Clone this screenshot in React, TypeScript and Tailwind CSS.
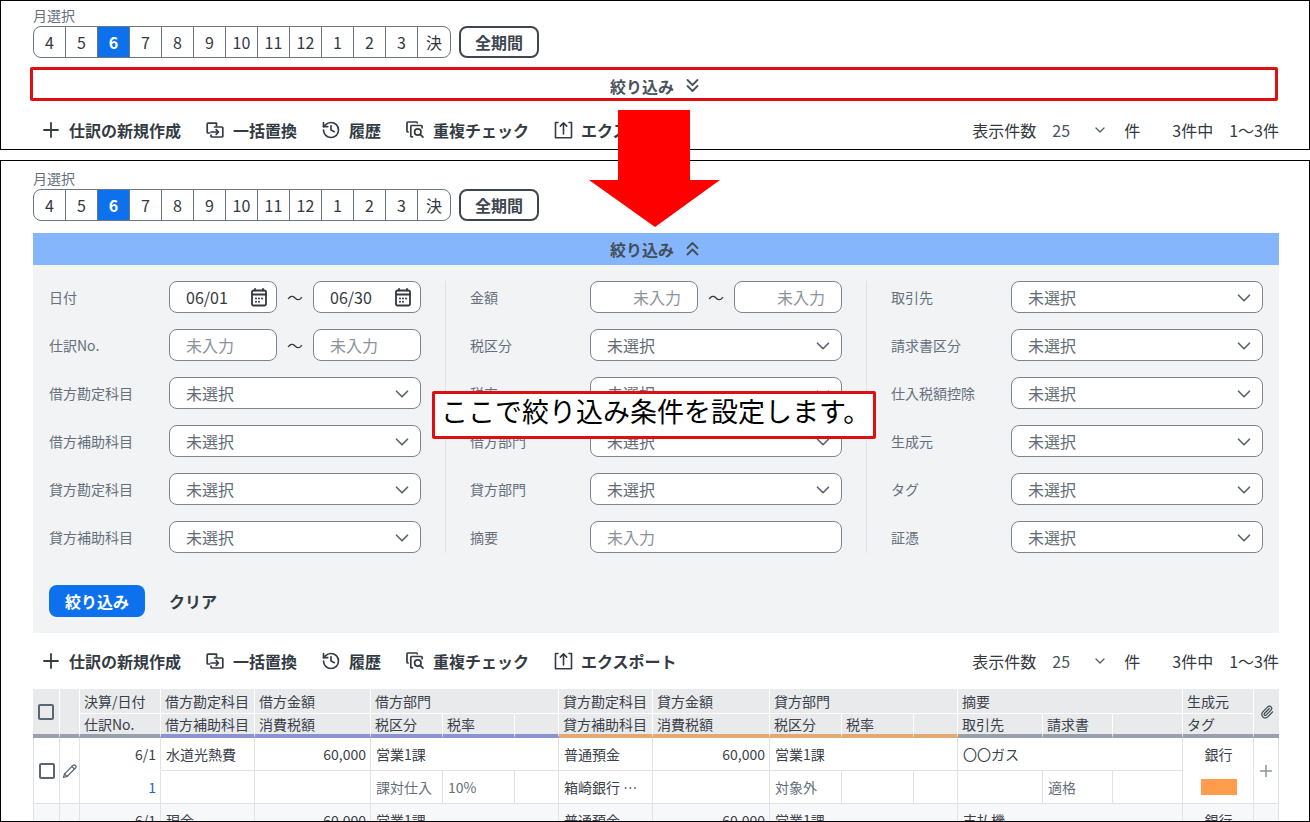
import type { ReactNode } from "react";
import { ChevronDown, History, Paperclip } from "lucide-react";

const MONTHS = ["4", "5", "6", "7", "8", "9", "10", "11", "12", "1", "2", "3", "決"];

const LINE = {
  fill: "none",
  stroke: "currentColor",
  strokeLinecap: "round" as const,
  strokeLinejoin: "round" as const,
};

function PlusIcon() {
  return (
    <svg viewBox="0 0 20 20" className="size-5" strokeWidth={1.8} {...LINE}>
      <path d="M10 3v14M3 10h14" />
    </svg>
  );
}

function ReplaceIcon() {
  return (
    <svg viewBox="0 0 20 20" className="size-5" strokeWidth={1.7} {...LINE}>
      <path d="M4.500 13H3a.8.8 0 0 1-.8-.8V4a.8.8 0 0 1 .8-.8h8.500v2.600" />
      <path d="M9.500 7h7.500a.8.8 0 0 1 .8.8v8.400a.8.8 0 0 1-.8.8H6.800a.8.8 0 0 1-.8-.8V15" />
      <path d="M6 12h7.300M11.200 9.700l2.300 2.300-2.300 2.300" />
    </svg>
  );
}

function DuplicateIcon() {
  return (
    <svg viewBox="0 0 20 20" className="size-5" strokeWidth={1.7} {...LINE}>
      <path d="M3.200 12h-.4a.8.8 0 0 1-.8-.8V2.800a.8.8 0 0 1 .8-.8h8.700a.8.8 0 0 1 .8.8" />
      <path d="M7.500 16.800H6.600a.8.8 0 0 1-.8-.8V6.300a.8.8 0 0 1 .8-.8h9.700a.8.8 0 0 1 .8.8v1.500" />
      <circle cx="12.800" cy="12" r="3.200" />
      <path d="M15.200 14.400l2.800 2.800" />
    </svg>
  );
}

function ExportIcon() {
  return (
    <svg viewBox="0 0 20 20" className="size-5" strokeWidth={1.6} {...LINE}>
      <path d="M5 2.500H2.500v15.200h16V2.500H16" />
      <path d="M10.500 14v-11M7.300 6.100l3.200-3.200 3.200 3.200" />
    </svg>
  );
}

function CalendarIcon() {
  return (
    <svg viewBox="0 0 20 20" className="size-5" strokeWidth={1.8} {...LINE}>
      <rect x="3" y="3.500" width="14" height="15" rx="1.500" />
      <path d="M3 7.500h14M6 1.800v1.700M14 1.800v1.700" />
      <path d="M7 11.500h.01M10 11.500h.01M13 11.500h.01M7 14.700h.01M10 14.700h.01" strokeWidth={2} />
    </svg>
  );
}

function PencilIcon() {
  return (
    <svg viewBox="0 0 16 16" className="size-4" strokeWidth={1.200} {...LINE}>
      <path d="M1.500 14.500l1-3.500L11.200 2.200a1.300 1.300 0 0 1 1.800 0l.8.8a1.300 1.300 0 0 1 0 1.800L5 13.500z" />
      <path d="M9.900 3.500l2.600 2.600M2.500 11l2.500 2.500" />
    </svg>
  );
}

function DoubleChevron({ up = false }: { up?: boolean }) {
  return (
    <svg viewBox="0 0 20 20" className="size-5" strokeWidth={1.800} {...LINE}>
      <path d={up ? "M5.500 9l5-5 5 5M5.500 15.500l5-5 5 5" : "M5.500 4l5 5 5-5M5.500 10l5 5 5-5"} />
    </svg>
  );
}

function MonthPicker() {
  return (
    <div>
      <div className="pb-0.5 text-sm leading-[18px] text-[#66707c]">月選択</div>
      <div className="flex gap-2">
        <div className="flex overflow-hidden rounded-lg border border-[#6b7684]">
          {MONTHS.map((m, i) => (
            <button
              key={m}
              type="button"
              className={
                "h-[30px] w-8 " +
                (i < MONTHS.length - 1 ? "border-r border-[#6b7684] " : "") +
                (m === "6" ? "bg-[#0d71ee] font-bold text-white" : "text-[#33393f]")
              }
            >
              {m}
            </button>
          ))}
        </div>
        <button type="button" className="h-8 w-20 rounded-lg border-2 border-[#3f4650] font-bold text-[#3f4650]">
          全期間
        </button>
      </div>
    </div>
  );
}

function Tool({ icon, children }: { icon: ReactNode; children: ReactNode }) {
  return (
    <button type="button" className="flex items-center gap-2 font-bold whitespace-nowrap text-[#343b43]">
      {icon}
      {children}
    </button>
  );
}

function Toolbar({ id }: { id: string }) {
  return (
    <div className="mt-3 flex h-8 items-center justify-between text-[#33393f]">
      <div className="flex gap-6 pl-2">
        <Tool icon={<PlusIcon />}>仕訳の新規作成</Tool>
        <Tool icon={<ReplaceIcon />}>一括置換</Tool>
        <Tool icon={<History className="size-5" strokeWidth={2} />}>履歴</Tool>
        <Tool icon={<DuplicateIcon />}>重複チェック</Tool>
        <Tool icon={<ExportIcon />}>エクスポート</Tool>
      </div>
      <div className="flex items-center gap-8 whitespace-nowrap">
        <div className="flex items-center gap-2">
          <label htmlFor={id}>表示件数</label>
          <div className="relative">
            <select id={id} className="h-8 w-[72px] appearance-none bg-transparent pl-2 text-[#4b535d]">
              <option>25</option>
            </select>
            <ChevronDown className="pointer-events-none absolute top-2 right-2 size-4 text-[#55606b]" strokeWidth={2} />
          </div>
          <span>件</span>
        </div>
        <div className="flex gap-4">
          <span>3件中</span>
          <span>1〜3件</span>
        </div>
      </div>
    </div>
  );
}

const BOX = "h-8 w-full min-w-0 rounded-lg border border-[#7b858f] bg-white placeholder:text-[#8b939c] placeholder:opacity-100 ";

function SelectRow({ label, id }: { label: string; id: string }) {
  return (
    <div className="flex h-8 items-center">
      <label htmlFor={id} className="w-30 shrink-0 text-sm text-[#66707c]">
        {label}
      </label>
      <div className="relative flex-1">
        <select id={id} className={BOX + "appearance-none px-4 text-[#626c77]"}>
          <option>未選択</option>
        </select>
        <ChevronDown className="pointer-events-none absolute top-1.5 right-2 size-[22px] text-[#5b6672]" strokeWidth={1.900} />
      </div>
    </div>
  );
}

function RangeRow({ label, id, kind }: { label: string; id: string; kind: "date" | "number" | "amount" }) {
  const dates = ["06/01", "06/30"];
  const field = (n: number) => (
    <div className="relative flex-1">
      <input
        id={n === 0 ? id : id + "-to"}
        aria-label={n === 0 ? undefined : label}
        type="text"
        placeholder="未入力"
        defaultValue={kind === "date" ? dates[n] : undefined}
        className={BOX + "px-4 text-[#33393f] " + (kind === "amount" ? "text-right" : "")}
      />
      {kind === "date" && (
        <span className="pointer-events-none absolute top-1.5 right-2 text-[#33393f]">
          <CalendarIcon />
        </span>
      )}
    </div>
  );
  return (
    <div className="flex h-8 items-center">
      <label htmlFor={id} className="w-30 shrink-0 text-sm text-[#66707c]">
        {label}
      </label>
      <div className="flex flex-1 items-center">
        {field(0)}
        <span className="w-9 text-center text-[#33393f]">〜</span>
        {field(1)}
      </div>
    </div>
  );
}

function Filters() {
  return (
    <form className="bg-[#f1f3f5] p-4" onSubmit={(e) => e.preventDefault()}>
      <div className="grid grid-cols-[1fr_1px_1fr_1px_1fr] gap-x-6">
        <div className="flex flex-col gap-4">
          <RangeRow label="日付" id="date" kind="date" />
          <RangeRow label="仕訳No." id="number" kind="number" />
          <SelectRow label="借方勘定科目" id="debit-account" />
          <SelectRow label="借方補助科目" id="debit-sub" />
          <SelectRow label="貸方勘定科目" id="credit-account" />
          <SelectRow label="貸方補助科目" id="credit-sub" />
        </div>
        <div className="bg-[#dfe3e6]" />
        <div className="flex flex-col gap-4">
          <RangeRow label="金額" id="amount" kind="amount" />
          <SelectRow label="税区分" id="tax-class" />
          <SelectRow label="税率" id="tax-rate" />
          <SelectRow label="借方部門" id="debit-dept" />
          <SelectRow label="貸方部門" id="credit-dept" />
          <div className="flex h-8 items-center">
            <label htmlFor="note" className="w-30 shrink-0 text-sm text-[#66707c]">
              摘要
            </label>
            <input id="note" type="text" placeholder="未入力" className={BOX + "px-4"} />
          </div>
        </div>
        <div className="bg-[#dfe3e6]" />
        <div className="flex flex-col gap-4">
          <SelectRow label="取引先" id="partner" />
          <SelectRow label="請求書区分" id="invoice" />
          <SelectRow label="仕入税額控除" id="deduction" />
          <SelectRow label="生成元" id="source" />
          <SelectRow label="タグ" id="tag" />
          <SelectRow label="証憑" id="evidence" />
        </div>
      </div>
      <div className="mt-8 flex items-center gap-6">
        <button type="submit" className="h-8 w-24 rounded-lg bg-[#0d71ee] font-bold text-white">
          絞り込み
        </button>
        <button type="button" className="font-bold text-[#343b43]">
          クリア
        </button>
      </div>
    </form>
  );
}

const COLS = [27, 20, 81, 94, 116, 72, 72, 44, 94, 117, 72, 72, 44, 85, 70, 70, 71, 25];

const GRAY = "border-b-[#98a1ab]";
const DEBIT = "border-b-[#8b93d2]";
const CREDIT = "border-b-[#e3a972]";

function Top({ children, span = 1 }: { children?: ReactNode; span?: number }) {
  return (
    <th colSpan={span} className="h-[25px] border-r border-b border-white px-1 text-left font-normal">
      {children}
    </th>
  );
}

function Bottom({ children, tone }: { children?: ReactNode; tone: string }) {
  return (
    <th className={"h-6 border-r border-b-4 border-r-white px-1 text-left font-normal " + tone}>
      {children}
    </th>
  );
}

function Cell({
  children,
  span = 1,
  open = false,
  align = "",
}: {
  children?: ReactNode;
  span?: number;
  open?: boolean;
  align?: string;
}) {
  return (
    <td
      colSpan={span}
      className={
        "h-[33px] border-r border-b border-r-[#dfe3e8] pr-1 pl-[5px] " +
        (open ? "border-b-transparent " : "border-b-[#dfe3e8] ") +
        align
      }
    >
      {children}
    </td>
  );
}

const TALL = "border-r border-b border-[#dfe3e8] align-middle ";
const CHECK = "block size-4 appearance-none rounded-xs border-2 border-[#5b6672] mx-auto ";

function JournalTable() {
  return (
    <table className="mt-3 w-full table-fixed border-separate border-spacing-0 text-sm leading-5 whitespace-nowrap text-[#3a4149]">
      <colgroup>
        {COLS.map((w, i) => (
          <col key={i} style={{ width: w }} />
        ))}
      </colgroup>
      <thead className="bg-[#e8eaec]">
        <tr>
          <th rowSpan={2} className={"border-r border-b-4 border-r-white " + GRAY}>
            <input type="checkbox" aria-label="すべて選択" className={CHECK + "bg-transparent"} />
          </th>
          <th rowSpan={2} className={"border-r border-b-4 border-r-white " + GRAY} />
          <Top>決算/日付</Top>
          <Top>借方勘定科目</Top>
          <Top>借方金額</Top>
          <Top span={3}>借方部門</Top>
          <Top>貸方勘定科目</Top>
          <Top>貸方金額</Top>
          <Top span={3}>貸方部門</Top>
          <Top span={3}>摘要</Top>
          <Top>生成元</Top>
          <th rowSpan={2} className={"border-b-4 " + GRAY}>
            <Paperclip className="mx-auto size-3.5" strokeWidth={2} />
          </th>
        </tr>
        <tr>
          <Bottom tone={GRAY}>仕訳No.</Bottom>
          <Bottom tone={DEBIT}>借方補助科目</Bottom>
          <Bottom tone={DEBIT}>消費税額</Bottom>
          <Bottom tone={DEBIT}>税区分</Bottom>
          <Bottom tone={DEBIT}>税率</Bottom>
          <Bottom tone={DEBIT} />
          <Bottom tone={CREDIT}>貸方補助科目</Bottom>
          <Bottom tone={CREDIT}>消費税額</Bottom>
          <Bottom tone={CREDIT}>税区分</Bottom>
          <Bottom tone={CREDIT}>税率</Bottom>
          <Bottom tone={CREDIT} />
          <Bottom tone={GRAY}>取引先</Bottom>
          <Bottom tone={GRAY}>請求書</Bottom>
          <Bottom tone={GRAY} />
          <Bottom tone={GRAY}>タグ</Bottom>
        </tr>
      </thead>
      <tbody>
        <tr>
          <td rowSpan={2} className={TALL + "border-l"}>
            <input type="checkbox" aria-label="仕訳 1 を選択" className={CHECK + "bg-white"} />
          </td>
          <td rowSpan={2} className={TALL}>
            <button type="button" aria-label="編集" className="mx-auto block text-[#5b6672]">
              <PencilIcon />
            </button>
          </td>
          <Cell open align="text-right">6/1</Cell>
          <Cell>水道光熱費</Cell>
          <Cell align="text-right">60,000</Cell>
          <Cell span={3}>営業1課</Cell>
          <Cell>普通預金</Cell>
          <Cell align="text-right">60,000</Cell>
          <Cell span={3}>営業1課</Cell>
          <Cell span={3}>〇〇ガス</Cell>
          <Cell open align="text-center">銀行</Cell>
          <td rowSpan={2} className={TALL}>
            <button type="button" aria-label="証憑を追加" className="mx-auto block text-[#8b939c]">
              <svg viewBox="0 0 16 16" className="size-4" strokeWidth={1.500} {...LINE}>
                <path d="M8 2.500v11M2.500 8h11" />
              </svg>
            </button>
          </td>
        </tr>
        <tr className="text-[#66707c]">
          <Cell align="text-right">
            <a href="#1" className="text-[#1a66c4]">1</a>
          </Cell>
          <Cell />
          <Cell />
          <Cell>課対仕入</Cell>
          <Cell>10%</Cell>
          <Cell />
          <Cell align="text-[#3a4149]">箱崎銀行 …</Cell>
          <Cell />
          <Cell>対象外</Cell>
          <Cell />
          <Cell />
          <Cell />
          <Cell>適格</Cell>
          <Cell />
          <Cell>
            <div className="mx-auto h-4 w-9 bg-[#ff9d4d]" />
          </Cell>
        </tr>
        <tr className="bg-[#f7f8fa]">
          <td className="border-x border-[#dfe3e8]" />
          <td className="border-r border-[#dfe3e8]" />
          <Cell open align="text-right">6/1</Cell>
          <Cell>現金</Cell>
          <Cell align="text-right">60,000</Cell>
          <Cell span={3}>営業1課</Cell>
          <Cell>普通預金</Cell>
          <Cell align="text-right">60,000</Cell>
          <Cell span={3}>営業1課</Cell>
          <Cell span={3}>支払機</Cell>
          <Cell open align="text-center">銀行</Cell>
          <td className="border-r border-[#dfe3e8]" />
        </tr>
      </tbody>
    </table>
  );
}

export default function App() {
  return (
    <div className="relative flex h-screen flex-col gap-2.5 overflow-hidden bg-white font-['Noto_Sans_CJK_JP',sans-serif] text-base leading-6">
      <section className="border border-black pt-[5px] pr-[30px] pb-[3px] pl-8">
        <MonthPicker />
        <div className="relative mt-3">
          <button type="button" className="flex h-8 w-full items-center justify-center gap-2 font-bold text-[#4a525c]">
            絞り込み
            <DoubleChevron />
          </button>
          <div className="pointer-events-none absolute -top-[3px] right-px bottom-px -left-[3px] rounded-xs border-3 border-[#e00f0f]" />
        </div>
        <Toolbar id="page-size-closed" />
      </section>

      <section className="min-h-0 flex-1 overflow-hidden border border-black pt-2 pr-[30px] pl-8">
        <MonthPicker />
        <button
          type="button"
          className="mt-3 flex h-8 w-full items-center justify-center gap-2 bg-[#85b6fb] font-bold text-[#434e5c]"
        >
          絞り込み
          <DoubleChevron up />
        </button>
        <Filters />
        <Toolbar id="page-size-open" />
        <JournalTable />
      </section>

      <svg viewBox="0 0 132 117" className="absolute top-[110px] left-1/2 h-[117px] w-[132px] -translate-x-1/2" aria-hidden="true">
        <path d="M29 0h72v70h30L66 117 0 70h29z" fill="#ff0000" />
      </svg>

      <div className="absolute top-[391px] left-[432px] h-12 w-[444px] rounded-xs border-3 border-[#e00f0f] bg-white pl-1.5 text-[27px] leading-[34px] font-normal whitespace-nowrap text-black">
        ここで絞り込み条件を設定します。
      </div>
    </div>
  );
}
